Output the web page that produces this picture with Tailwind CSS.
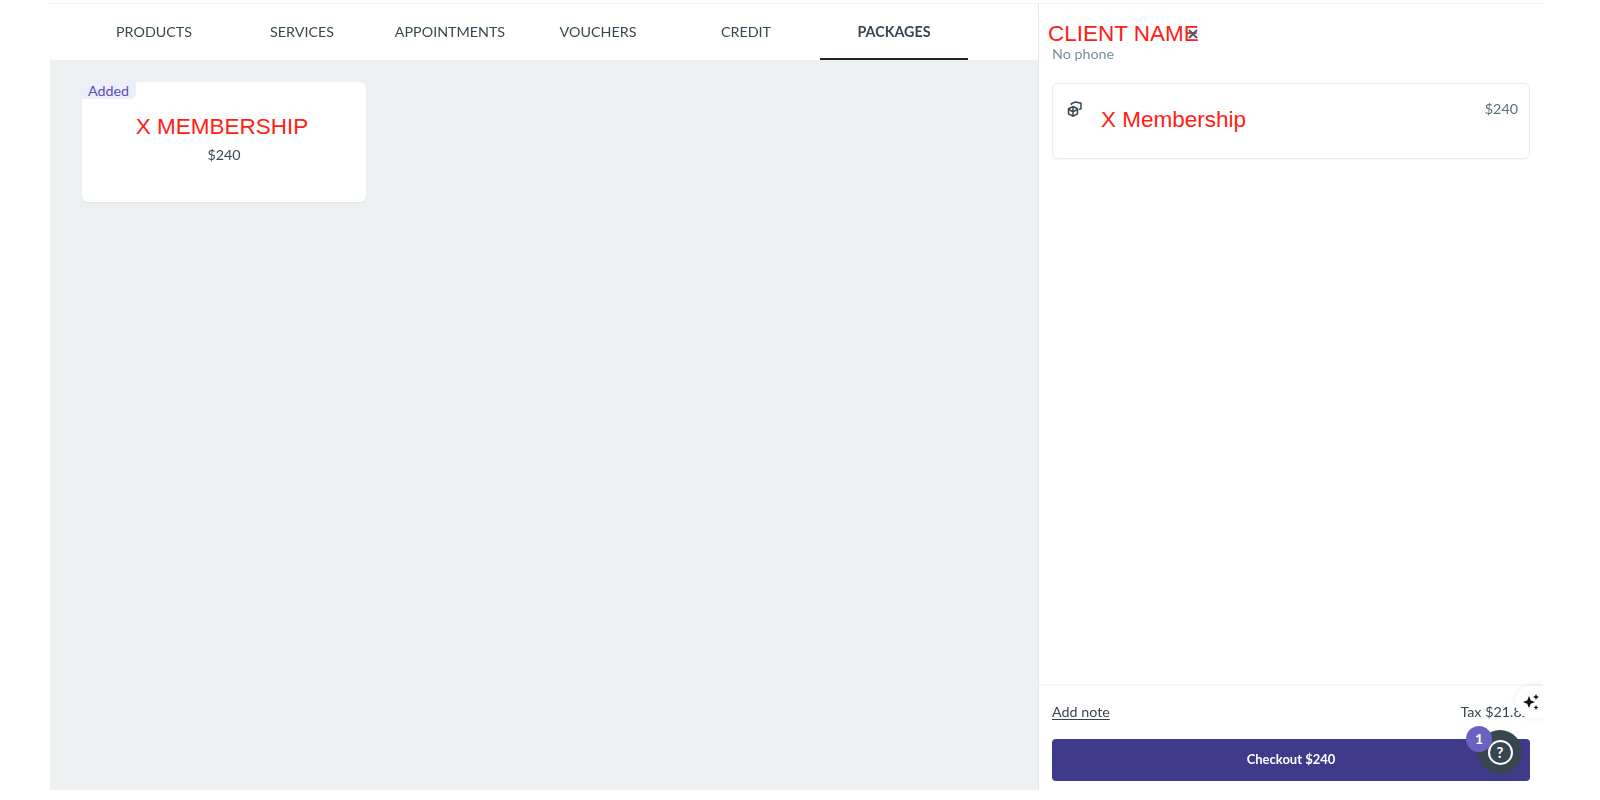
<!DOCTYPE html>
<html lang="en">
<head>
  <meta charset="UTF-8" />
  <title>Checkout - Packages</title>
  <script src="https://cdn.jsdelivr.net/npm/@tailwindcss/browser@4"></script>
</head>
<body class="bg-white font-['Lato',sans-serif] text-[#37474f]">
  <div class="w-[1600px] h-[800px] pl-[50px] pr-[57px] pt-[3px] pb-[10px] overflow-hidden">
    <div class="h-full flex border-t border-[#f1f3f4]">

      <!-- left: tabs and items -->
      <div class="w-[988px] flex flex-col">
        <nav class="h-[56px] pl-[30px] flex text-[14.3px] bg-white">
          <a class="w-[148px] flex items-center justify-center blur-[0.4px]">PRODUCTS</a>
          <a class="w-[148px] flex items-center justify-center blur-[0.4px]">SERVICES</a>
          <a class="w-[148px] flex items-center justify-center blur-[0.4px]">APPOINTMENTS</a>
          <a class="w-[148px] flex items-center justify-center blur-[0.4px]">VOUCHERS</a>
          <a class="w-[148px] flex items-center justify-center blur-[0.4px]">CREDIT</a>
          <a class="w-[148px] flex items-center justify-center pt-[2px] font-bold border-b-2 border-[#1f2426]"><span class="blur-[0.4px]">PACKAGES</span></a>
        </nav>
        <div class="flex-1 bg-[#ecf0f1] pl-[32px] pt-[22px]">
          <div class="relative w-[284px] h-[120px] bg-white rounded-md shadow-[0_1px_2px_rgba(0,0,0,0.05)] flex flex-col items-center">
            <span class="absolute left-0 top-0 h-[17px] w-[54px] pl-[6px] bg-[#eeedfa] text-[#5a52b8] text-[14.3px] leading-[17px] rounded-tl-md rounded-br-md">Added</span>
            <div class="mt-[29px] pr-[4px] font-['Liberation_Sans',sans-serif] text-[#ff2015] text-[22.5px] leading-[32px]">X MEMBERSHIP</div>
            <div class="mt-[2px] text-[14.3px] leading-[20px] blur-[0.4px]">$240</div>
          </div>
        </div>
      </div>

      <!-- right: client and cart -->
      <aside class="relative w-[505px] border-l border-[#e3e7e9] flex flex-col overflow-hidden">
        <div class="relative h-[59px]">
          <div class="absolute left-[9px] top-[15px] font-['Liberation_Sans',sans-serif] text-[#ff2015] text-[22.5px] leading-[30px]">CLIENT NAME</div>
          <svg class="absolute left-[148px] top-[24px] w-[12px] h-[12px]" viewBox="0 0 12 12" fill="none" stroke="#455a64" stroke-width="1.8"><path d="M2 2l8 8M10 2l-8 8"/></svg>
          <div class="absolute left-[13px] top-[40px] text-[14.3px] leading-[20px] text-[#78909c] blur-[0.4px]">No phone</div>
        </div>
        <div class="mx-[13px] mt-[20px] h-[76px] border border-[#e8ecee] rounded-md shadow-[0_1px_2px_rgba(0,0,0,0.04)] flex items-start pl-[14px] pr-[11px]">
          <svg class="mt-[17px] w-[16px] h-[16px]" viewBox="0 0 16 16" fill="none" stroke="#37474f" stroke-width="1.5">
            <path d="M6 5.500l4.500 2.300v5L6 15.200l-4.500-2.400v-5z"/>
            <path d="M1.500 8.500L6 10.700l4.500-2.200M6 6v9"/>
            <path d="M4.500 4V2.600L8.500 1l5.500 1.200v5.500l-2 .8"/>
          </svg>
          <div class="ml-[18px] mt-[21px] font-['Liberation_Sans',sans-serif] text-[#ff2015] text-[22.5px] leading-[30px]">X Membership</div>
          <div class="ml-auto mt-[15px] text-[14.3px] leading-[20px] text-[#546e7a] blur-[0.4px]">$240</div>
        </div>
        <div class="mt-auto border-t-2 border-[#f6f7f7] px-[13px] pt-[16px] pb-[9px]">
          <div class="flex justify-between text-[14.3px] leading-[20px]">
            <a class="underline underline-offset-2 blur-[0.4px]">Add note</a>
            <span class="blur-[0.4px]">Tax $21.82</span>
          </div>
          <button class="mt-[17px] w-full h-[42px] rounded bg-[#3f3b8a] text-white text-[13px] font-bold"><span class="blur-[0.3px]">Checkout $240</span></button>
        </div>

        <!-- floating widgets -->
        <div class="absolute right-[-16px] top-[682px] w-[44px] h-[32px] rounded-full bg-white shadow-[0_0_6px_rgba(0,0,0,0.08)] flex items-center pl-[7px]">
          <svg class="w-[18px] h-[18px]" viewBox="0 0 18 18" fill="#111"><path d="M7 3l1.800 4.400L13 9l-4.200 1.700L7 15l-1.800-4.300L1 9l4.200-1.600z"/><path d="M14 1l.9 2.100L17 4l-2.100.9L14 7l-.9-2.100L11 4l2.100-.9z"/><path d="M14 12l.8 1.800 1.700.7-1.700.7L14 17l-.8-1.800-1.700-.7 1.700-.7z"/></svg>
        </div>
        <div class="absolute left-[439px] top-[726px] w-[44px] h-[44px] rounded-full bg-[#37474f] flex items-center justify-center">
          <div class="w-[25px] h-[25px] rounded-full border-2 border-white text-white text-[15px] font-bold leading-[21px] text-center">?</div>
        </div>
        <div class="absolute left-[427px] top-[722px] w-[26px] h-[26px] rounded-full bg-[#6a62c0] text-white text-[14px] font-bold leading-[26px] text-center">1</div>
      </aside>
    </div>
  </div>
</body>
</html>
